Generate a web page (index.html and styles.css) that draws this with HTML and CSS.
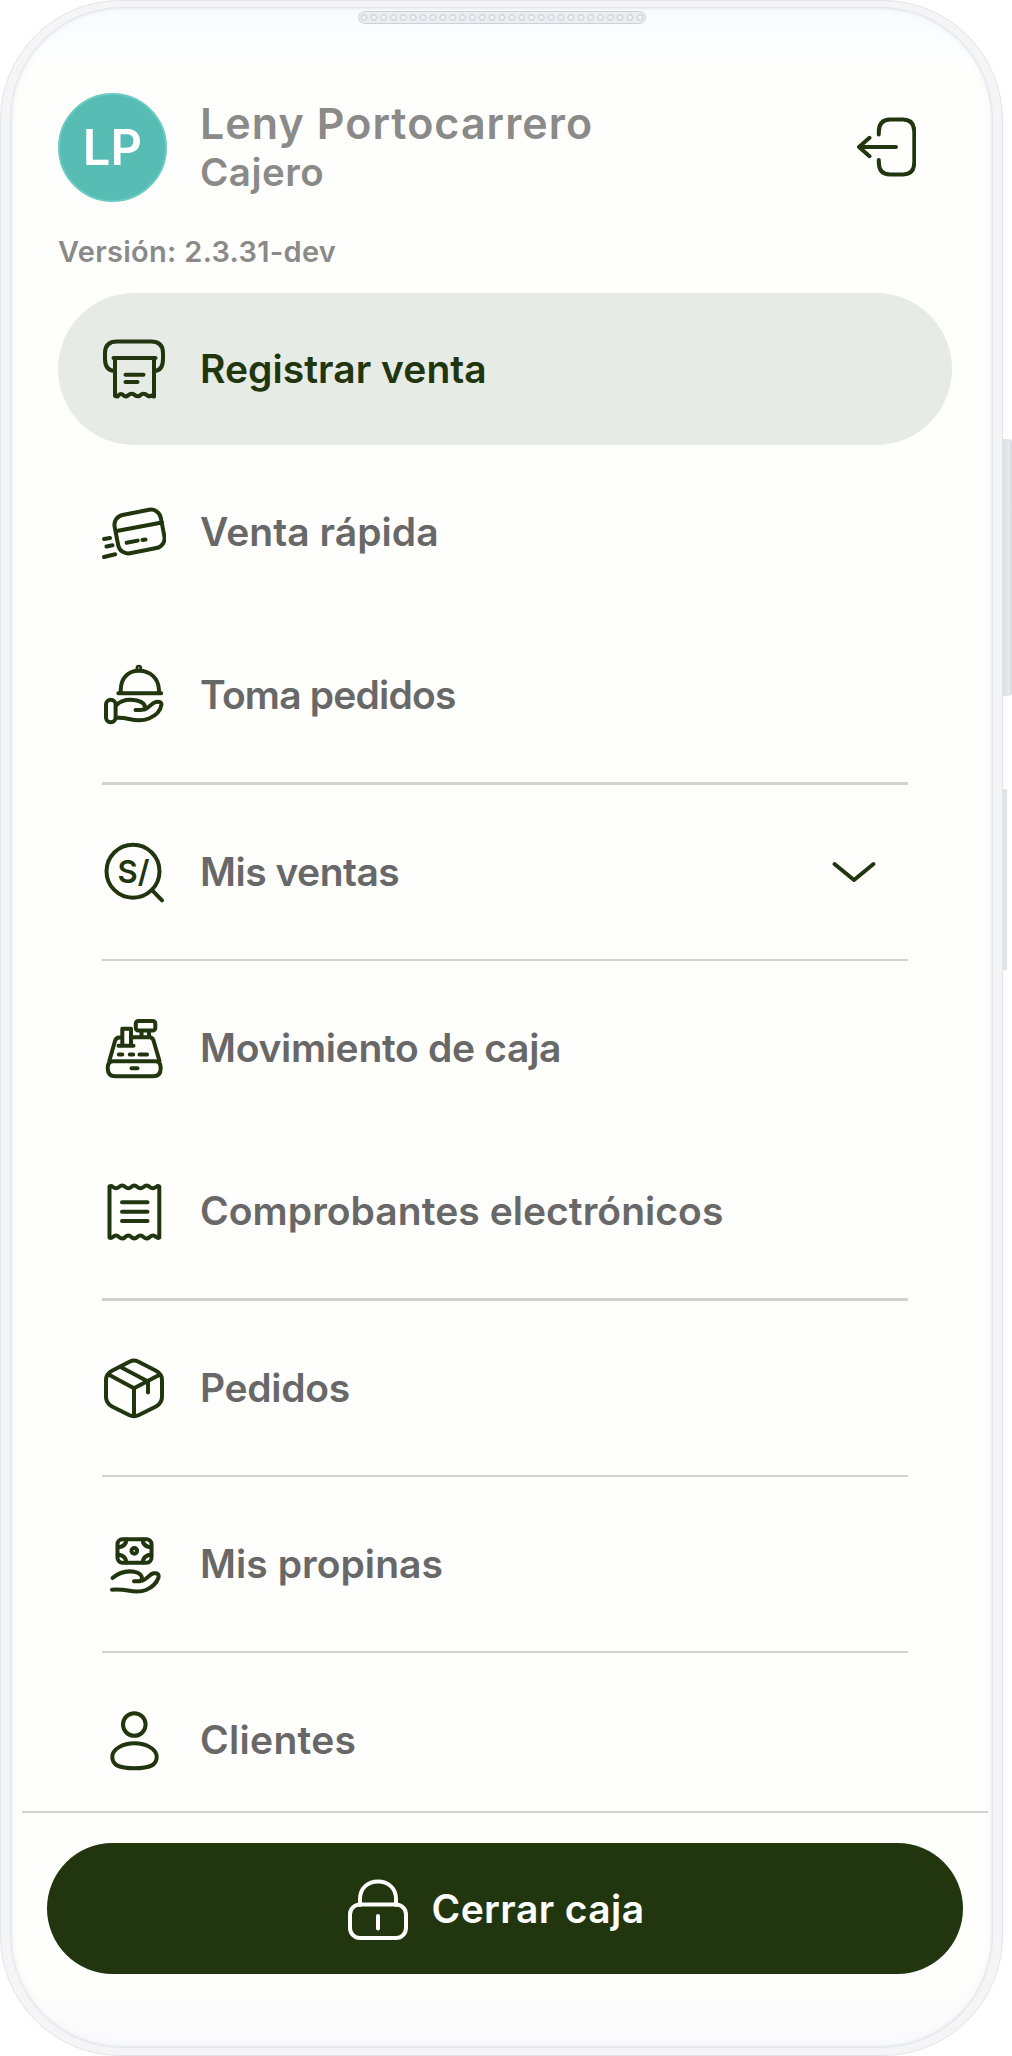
FILE: index.html
```html
<!DOCTYPE html>
<html lang="es">
<head>
<meta charset="utf-8">
<title>Menú de caja</title>
<link rel="stylesheet" href="styles.css">
</head>
<body>
<div class="device">
  <span class="side-key side-key-volume"></span>
  <span class="side-key side-key-power"></span>
  <span class="speaker"></span>
  <main class="screen">
    <header class="profile">
      <div class="avatar">LP</div>
      <div class="identity">
        <h1 class="name">Leny Portocarrero</h1>
        <p class="role">Cajero</p>
      </div>
      <button class="logout" aria-label="Salir">
        <svg class="icon" viewBox="0 0 64 64"><path d="M26.800 19.500V17Q26.800 4.500 38 4.500H51Q62.300 4.500 62.300 17V47Q62.300 59.500 51 59.500H38Q26.800 59.500 26.800 47V45M44 32H7M17.500 22.800L7 32L17.500 41.200"/></svg>
      </button>
    </header>
    <p class="version">Versión: 2.3.31-dev</p>
    <nav class="menu">
      <a class="item item-active">
        <svg class="icon" viewBox="0 0 64 64"><path d="M12 34Q3 33 3 22V16Q3 4.500 15 4.500H49Q61 4.500 61 16V22Q61 33 53 34M11.500 21H53.500M13 21V59L15.500 59.500Q18 56 20.500 57.500Q23 60.500 26 58.500Q29 55.500 32 57.500Q35 60.500 38 58.500Q41 55.500 44 57.500Q47 60.500 49 58.500L52 59.500V21M23.500 37.700H41.500M23.500 45H35.500"/></svg>
        <span class="label">Registrar venta</span>
      </a>
      <a class="item">
        <svg class="icon" viewBox="0 0 64 64"><rect x="14" y="12" width="47" height="39" rx="10" transform="rotate(-11 37.500 31.500)"/><path d="M14.700 31L60 22.500M24.700 42.800L35.700 40.600M40.500 40L43.500 39.600M2 39L8 38M4.500 46.500L10.500 45.300M2 57L13.200 54.200"/></svg>
        <span class="label">Venta rápida</span>
      </a>
      <a class="item">
        <svg class="icon" viewBox="0 0 64 64"><path d="M18.700 30V27C19 15 26 7.800 37 7.800S56.500 15 57 27V30M16.300 30.300H59.200"/><circle cx="36.800" cy="5" r="1.300"/><rect x="4" y="36.800" width="9.600" height="22.500" rx="4.800"/><path d="M14.500 42C19 37.500 27 36 35 37.500C41 39 43 42 42.800 44.500Q42.500 47 38 47H33.500M42.500 46.500C47 45.500 49 40 54 39Q59.500 38 59.500 41.500C58.500 48 53 53 47 55.500C41 58 33 57.500 27 56C22 54.800 18 54.500 14 54.800"/></svg>
        <span class="label label-tighter">Toma pedidos</span>
      </a>
      <hr class="rule">
      <a class="item">
        <svg class="icon" viewBox="0 0 64 64"><circle cx="31" cy="31.200" r="26.500"/><path d="M50.300 50.300L60 60.300"/><text class="currency" x="15.500" y="43">S/</text></svg>
        <span class="label label-tight">Mis ventas</span>
        <svg class="chevron" viewBox="0 0 46 24"><path d="M3.500 4L23 20L42.500 4"/></svg>
      </a>
      <hr class="rule">
      <a class="item">
        <svg class="icon" viewBox="0 0 64 64"><rect x="33.800" y="5" width="19.500" height="9.500" rx="2.500"/><path d="M39.500 15V21M47 15V21M7.300 45L13 25Q14 21.500 17.500 21.500H20M29 21.300H47.500Q50.500 21.300 51.500 24.500L57.500 45M20.300 29.500V12.700H29V29.500M16.500 29.800H31.500M16.800 38.400H20.300M27.800 38.400H31.200M37.500 38.400H45M29.500 52.300H35.500M11 45.300H53.500Q58.700 45.300 58.700 52Q58.700 60.300 51 60.300H13.500Q5.700 60.300 5.700 52Q5.700 45.300 11 45.300Z"/></svg>
        <span class="label label-snug">Movimiento de caja</span>
      </a>
      <a class="item">
        <svg class="icon" viewBox="0 0 64 64"><path d="M7.500 7.500Q9 6.500 11 8Q14 10.500 17 8Q20.300 5 23.300 8Q26.300 10.500 29.300 8Q32.300 5 35.300 8Q38.500 10.500 41.500 8Q44.700 5 47.700 8Q51 10.500 54 8Q56 6.500 57.300 7.500V58.500Q56 59.500 54 58Q51 55 47.700 58Q44.700 61 41.500 58Q38.500 55 35.300 58Q32.300 61 29.300 58Q26.300 55 23.300 58Q20.300 61 17 58Q14 55 11 58Q9 59.500 7.500 58.500ZM20 23.300H45.500M20 32.700H45.500M20 42H45.500"/></svg>
        <span class="label">Comprobantes electrónicos</span>
      </a>
      <hr class="rule">
      <a class="item">
        <svg class="icon" viewBox="0 0 64 64"><path d="M28 5.500Q32 3.500 36 5.500L54 14.700Q60 18 60 24V41Q60 47 54 50.500L37 59Q32 61.500 27 59L10 50.500Q4 47 4 41V24Q4 18 10 14.700ZM6.500 18.500L32 32.300L58 18.500M32 32.300V60M19.500 11.500L46 25.500V36.500"/></svg>
        <span class="label label-snug">Pedidos</span>
      </a>
      <hr class="rule">
      <a class="item">
        <svg class="icon" viewBox="0 0 64 64"><rect x="15.500" y="7.300" width="34" height="23.400" rx="5"/><circle cx="32.300" cy="18.900" r="2.800"/><path d="M24.500 7.500Q24 14.500 15.700 15.500M40.500 7.500Q41 14.500 49.300 15.500M24.500 30.500Q24 23.500 15.700 22.500M40.500 30.500Q41 23.500 49.300 22.500M10.500 46C17 40.500 24 38.500 32 39.700C38 40.500 40.500 44 40 47Q39.500 49.300 36 49.300H32M40 48.800C45 47.500 47 42.500 51.500 41.300Q57.500 40.500 56.500 45.500C54.500 51.500 50 55.500 44 58C38 60.500 32 59.800 26 58.500C20 57.500 15 57.500 10 57.700"/></svg>
        <span class="label">Mis propinas</span>
      </a>
      <hr class="rule">
      <a class="item">
        <svg class="icon" viewBox="0 0 64 64"><circle cx="32.300" cy="16.500" r="11.300"/><path d="M32.400 35.300C44 35.300 54.700 41 54.700 49C54.700 57 48 60.200 32.400 60.200S10.300 57 10.300 49C10.300 41 21 35.300 32.400 35.300Z"/></svg>
        <span class="label label-loose">Clientes</span>
      </a>
    </nav>
    <footer class="actions">
      <button class="close-till">
        <svg class="icon" viewBox="0 0 64 64"><path d="M14 28V22C14 11 22 4.500 32 4.500S50 11 50 22V28M32 39V51.500"/><rect x="4" y="27.500" width="56" height="33.500" rx="10"/></svg>
        <span>Cerrar caja</span>
      </button>
    </footer>
  </main>
</div>
</body>
</html>
```
FILE: styles.css
```css
* { box-sizing: border-box; }

body {
  margin: 0;
  background: #fff;
  font-family: Inter, "Liberation Sans", sans-serif;
  font-weight: 600;
  color: #686868;
}

h1, p, hr { margin: 0; }

button {
  padding: 0;
  border: 0;
  background: none;
  font: inherit;
}

/* Phone shell */
.device {
  position: relative;
  width: 1003px;
  height: 2056px;
  padding: 6px 9px 7px 9px;
  border: 1px solid #e3e4e8;
  border-radius: 120px;
  background: #f5f5f8;
}

.side-key {
  position: absolute;
  left: 1002px;
  border-radius: 0 4px 4px 0;
  background: linear-gradient(90deg, #dcdde3, #e8e8ed 60%, #d8d9e0);
}

.side-key-volume { top: 438px; width: 9px; height: 257px; }
.side-key-power { top: 788px; width: 4px; height: 181px; border-radius: 0 1px 1px 0; }

.speaker {
  position: absolute;
  top: 10px;
  left: 357px;
  width: 288px;
  height: 13px;
  border: 1px solid #cfd0d9;
  border-radius: 7px;
  background: radial-gradient(circle, #f3f3f6 0 1.5px, #d5d6dd 2.5px 3.2px, #ececf1 3.8px) 0 0 / 9.86px 11px;
}

.screen {
  display: flex;
  flex-direction: column;
  height: 100%;
  padding-top: 85px;
  overflow: hidden;
  border-radius: 112px;
  background: linear-gradient(#fafbfd, #fdfefe 45px, #fefefc 65px, #fefefc 1965px, #fafafc 2040px);
  box-shadow: inset 0 0 3px 1px #dcdde4, inset 0 0 12px #f3f4f7;
}

/* Profile */
.profile {
  display: flex;
  align-items: center;
  height: 110px;
  padding: 0 77px 0 48px;
}

.avatar {
  display: grid;
  place-items: center;
  width: 109px;
  height: 109px;
  border: 2px solid #6bcac1;
  border-radius: 50%;
  background: #56bcb4;
  color: #fff;
  font-size: 49px;
}

.identity {
  flex: 1;
  padding-left: 33px;
  color: #8a8a88;
}

.name {
  font-size: 43px;
  font-weight: 600;
  line-height: 50px;
  letter-spacing: 1.050px;
}

.role {
  font-size: 38.500px;
  line-height: 48px;
  letter-spacing: 0.500px;
}

.logout { display: flex; }

.version {
  padding-left: 48px;
  margin-top: 32px;
  color: #8a8a88;
  font-size: 29px;
  line-height: 36px;
  letter-spacing: 0.300px;
}

/* Menu */
.menu {
  display: flex;
  flex: 1;
  flex-direction: column;
  gap: 11.100px;
  min-height: 0;
  margin-top: 23px;
  padding: 0 41px 0 48px;
  overflow: hidden;
}

.item {
  display: flex;
  flex: none;
  align-items: center;
  gap: 34px;
  height: 152px;
  padding: 0 75px 0 44px;
  border-radius: 76px;
}

.item-active {
  background: #e6ebe5;
  color: #21350f;
}

.label {
  flex: 1;
  font-size: 39px;
  line-height: 48px;
  letter-spacing: 0.050px;
  white-space: nowrap;
}

.label-snug { letter-spacing: -0.300px; }
.label-tight { letter-spacing: -0.500px; }
.label-tighter { letter-spacing: -0.800px; }
.label-loose { letter-spacing: 0.300px; }

.rule {
  flex: none;
  height: 2.250px;
  margin: 0 44px;
  border: 0;
  background: #d2d3d1;
}

.icon {
  flex: none;
  width: 64px;
  height: 64px;
}

.icon, .chevron {
  fill: none;
  stroke: #21350f;
  stroke-width: 4px;
  stroke-linecap: round;
  stroke-linejoin: round;
}

.chevron {
  width: 46px;
  height: 24px;
}

.currency {
  fill: #21350f;
  stroke: none;
  font-size: 31px;
}

/* Footer */
.actions {
  height: 237px;
  margin: 0 5px 0 12px;
  padding: 30px 25px 0;
  border-top: 2px solid #d2d3d1;
}

.close-till {
  display: flex;
  align-items: center;
  justify-content: center;
  gap: 22px;
  width: 100%;
  height: 131px;
  padding-right: 20px;
  border-radius: 66px;
  background: #21350f;
  color: #fefefc;
  font-size: 39px;
  letter-spacing: 0.400px;
}

.close-till .icon { stroke: #fefefc; }
```
